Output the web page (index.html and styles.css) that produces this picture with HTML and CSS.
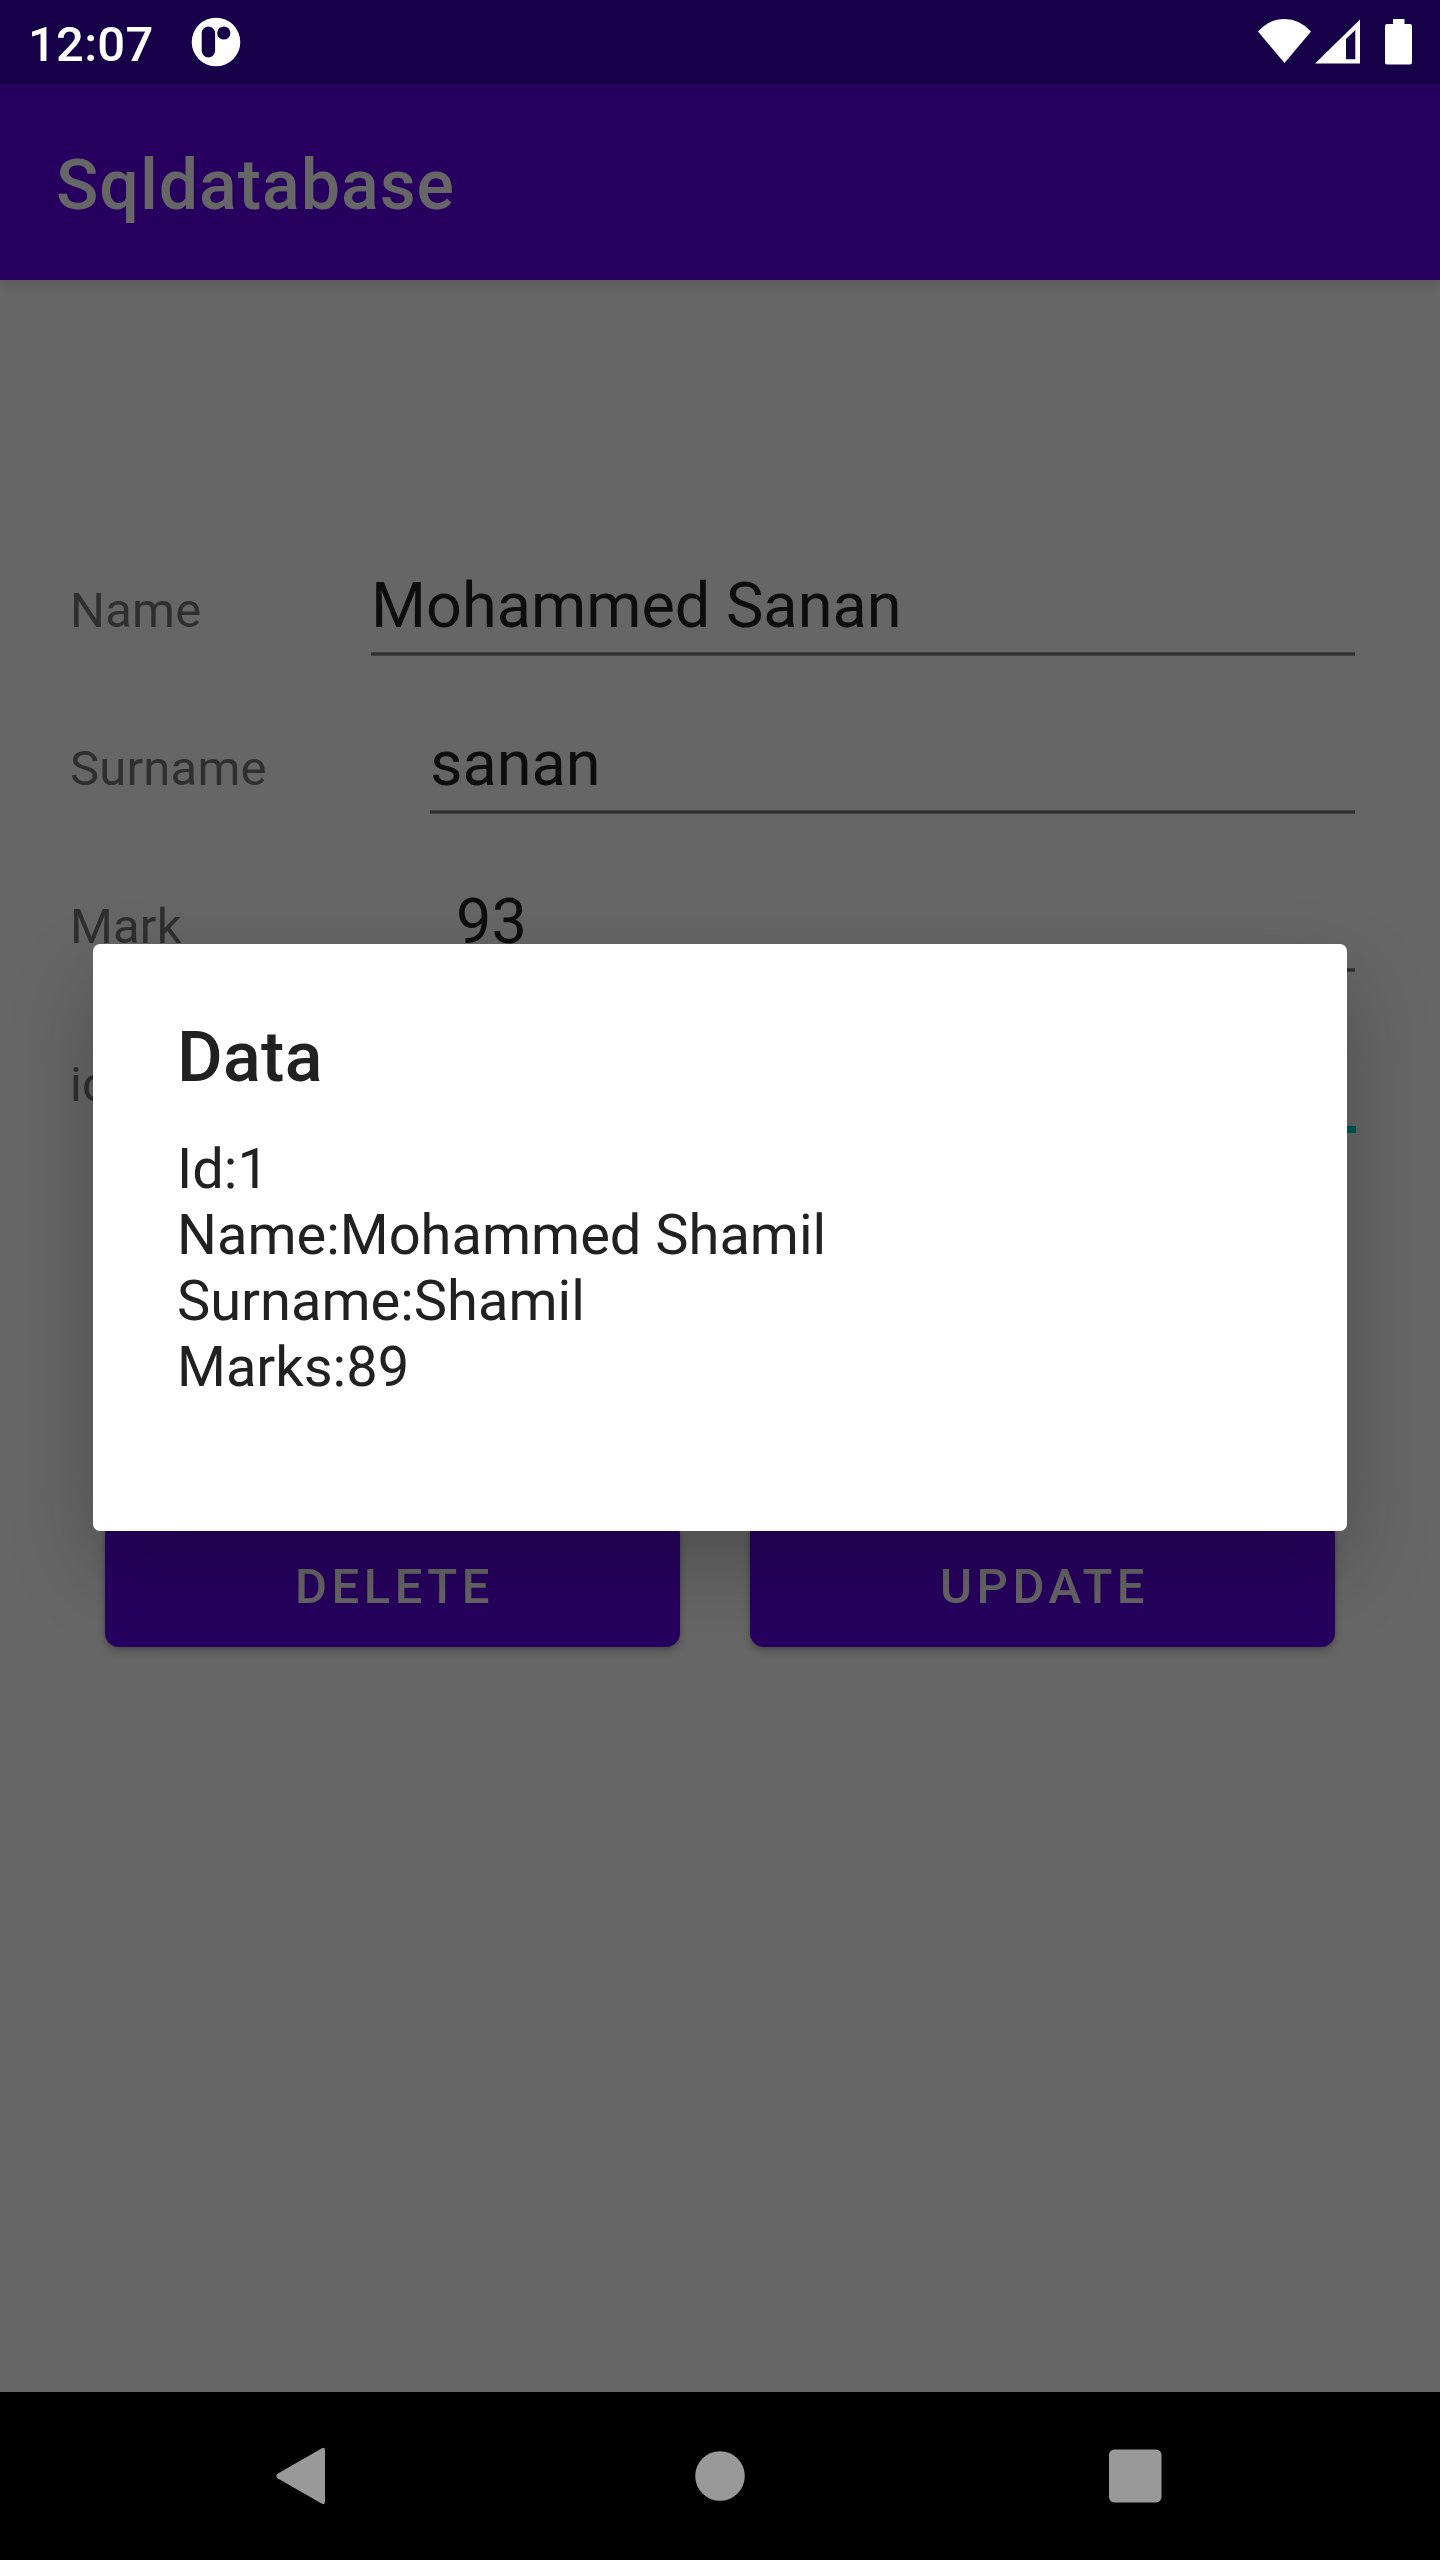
FILE: index.html
```html
<!DOCTYPE html>
<html lang="en">
<head>
<meta charset="utf-8">
<title>Sqldatabase</title>
<link rel="stylesheet" href="styles.css">
</head>
<body>
<div class="screen">
  <header class="status-bar">
    <span class="clock">12:07</span>
    <svg class="app-icon" width="50" height="50" viewBox="0 0 50 50">
      <path fill="#fff" fill-rule="evenodd" d="M25 .7a24.3 24.3 0 1 0 0 48.6a24.3 24.3 0 1 0 0-48.6zM17.4 9.5a6.7 6.7 0 0 1 6.7 6.7v17.6a6.7 6.7 0 0 1-13.4 0V16.200a6.700 6.700 0 0 1 6.700-6.700zM32.800 9.400a6.600 6.600 0 1 1 0 13.200a6.600 6.600 0 1 1 0-13.200z"/>
    </svg>
    <svg class="system-icons" width="156" height="48" viewBox="0 0 156 48">
      <path fill="#fff" d="M0 13.500Q11.500 1 26.500 1T53 13.500L26.500 45z"/>
      <path fill="#fff" fill-rule="evenodd" d="M57 45.500L102 1.500V45.500zM88 21L97.300 12V41.300H88z"/>
      <path fill="#fff" d="M135 1h11.500v5H152q2 0 2 2v36.500q0 2-2 2h-23q-2 0-2-2V8q0-2 2-2h6z"/>
    </svg>
  </header>
  <div class="app-bar"><h1 class="app-title">Sqldatabase</h1></div>
  <main class="content">
    <form class="form">
      <div class="row"><label class="label">Name</label><div class="field field-name">Mohammed Sanan</div></div>
      <div class="row"><label class="label">Surname</label><div class="field field-surname">sanan</div></div>
      <div class="row"><label class="label">Mark</label><div class="field field-mark">93</div></div>
      <div class="row"><label class="label">id</label><div class="field field-id field-focused"></div></div>
    </form>
    <div class="actions">
      <button class="button button-delete" type="button">DELETE</button>
      <button class="button button-update" type="button">UPDATE</button>
    </div>
  </main>
  <nav class="nav-bar">
    <svg class="nav-icon" width="60" height="60" viewBox="0 0 60 60"><path fill="#999" d="M6.500 27.700L50.500 2.400Q54 .5 54 5V55Q54 59.500 50.500 57.600L6.500 32.300Q4 30 6.500 27.700z"/></svg>
    <svg class="nav-icon" width="60" height="60" viewBox="0 0 60 60"><circle cx="30" cy="30" r="24.800" fill="#999"/></svg>
    <svg class="nav-icon" width="60" height="60" viewBox="0 0 60 60"><rect x="4" y="3.500" width="52.500" height="53" rx="5.500" fill="#999"/></svg>
  </nav>
  <div class="scrim"></div>
  <section class="dialog" role="dialog">
    <h2 class="dialog-title">Data</h2>
    <p class="dialog-message">Id:1<br>Name:Mohammed Shamil<br>Surname:Shamil<br>Marks:89</p>
  </section>
</div>
</body>
</html>
```
FILE: styles.css
```css
* { box-sizing: border-box; }

body {
  margin: 0;
  font-family: Roboto, sans-serif;
  background: #fff;
}

.screen {
  position: relative;
  display: flex;
  flex-direction: column;
  width: 1440px;
  height: 2560px;
  overflow: hidden;
}

/* The system bars stay undimmed above the scrim. */
.status-bar {
  position: relative;
  z-index: 2;
  display: flex;
  align-items: flex-start;
  height: 84px;
  padding: 17px 26px 0 28px;
  background: #160048;
}

.clock {
  width: 163px;
  margin-top: -1px;
  font-size: 49px;
  font-weight: 500;
  line-height: 58px;
  letter-spacing: 0.25px;
  color: #fff;
}

.app-icon { display: block; }

.system-icons {
  display: block;
  margin: 1px 0 0 auto;
}

.app-bar {
  position: relative;
  height: 196px;
  padding: 60px 56px 0;
  background: #6200ee;
  box-shadow: 0 4px 14px rgba(0, 0, 0, .15);
}

.app-title {
  margin: 0;
  font-size: 70px;
  font-weight: 500;
  line-height: 82px;
  letter-spacing: 0.0135em;
  color: #fff;
}

.content {
  flex: 1;
  padding: 288px 84px 0 70px;
}

.form {
  display: flex;
  flex-direction: column;
  gap: 70px;
}

.row {
  display: flex;
  height: 88px;
}

.label {
  margin-top: 14px;
  font-size: 49px;
  line-height: 58px;
  letter-spacing: 0.2px;
  color: #757575;
}

.field {
  height: 88px;
  margin: 0 1px 0 auto;
  padding-top: 1px;
  font-size: 63px;
  line-height: 74px;
  color: #212121;
  background: linear-gradient(#a0a0a0 1px, #757575 1px, #757575 3px, #a0a0a0 3px) bottom / 100% 4px no-repeat;
}

.field-name { width: 984px; }
.field-surname { width: 925px; }
.field-mark { width: 899px; }

.field-focused {
  width: 900px;
  height: 91px;
  margin-right: 0;
  background: linear-gradient(#03dac5, #03dac5) bottom / 100% 7px no-repeat;
}

.actions {
  display: flex;
  gap: 70px;
  padding: 391px 21px 0 35px;
}

.button {
  height: 126px;
  padding: 5px 0 0 4px;
  border: 0;
  border-radius: 14px;
  font-family: inherit;
  font-size: 49px;
  font-weight: 500;
  letter-spacing: 0.092em;
  color: #fff;
  background: #6200ee;
  box-shadow: 0 5px 9px rgba(0, 0, 0, .2), 0 0 4px rgba(0, 0, 0, .15);
}

.button-delete { width: 575px; }
.button-update { width: 585px; }

.nav-bar {
  position: relative;
  z-index: 2;
  display: flex;
  justify-content: space-between;
  height: 168px;
  padding: 54px 275px 0 271px;
  background: #000;
}

.nav-icon:nth-child(2) { margin-left: 3px; }

.scrim {
  position: absolute;
  inset: 0;
  z-index: 1;
  background: rgba(0, 0, 0, .6);
}

.dialog {
  position: absolute;
  z-index: 1;
  top: 944px;
  left: 93px;
  width: 1254px;
  height: 587px;
  padding: 72px 84px 0;
  border-radius: 7px;
  background: #fff;
  box-shadow: 0 36px 84px rgba(0, 0, 0, .23);
}

.dialog-title {
  margin: 0 0 38px;
  font-size: 70px;
  font-weight: 500;
  line-height: 82px;
  letter-spacing: 0.3px;
  color: #212121;
}

.dialog-message {
  margin: 0;
  font-size: 56px;
  line-height: 66px;
  color: #212121;
}
```
